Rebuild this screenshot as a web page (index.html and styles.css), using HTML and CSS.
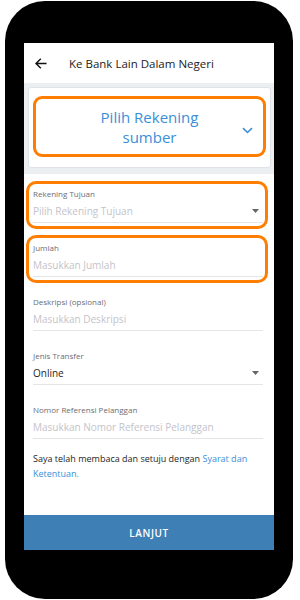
FILE: index.html
```html
<!DOCTYPE html>
<html lang="id">
<head>
<meta charset="utf-8">
<title>Ke Bank Lain Dalam Negeri</title>
<link rel="stylesheet" href="styles.css">
</head>
<body>
<div class="phone">
  <div class="screen">
    <header class="topbar">
      <svg class="back" width="12" height="11" viewBox="0 0 12 11"><path d="M11.5 5.5H1M5.8 0.7L1 5.5l4.8 4.8" fill="none" stroke="#111" stroke-width="1.4"/></svg>
      <span class="title">Ke Bank Lain Dalam Negeri</span>
    </header>
    <section class="source">
      <div class="card">
        <div class="source-box">
          <span class="source-text">Pilih Rekening<br>sumber</span>
          <svg class="chev" width="11" height="7" viewBox="0 0 11 7"><path d="M1 1.2l4.5 4.3L10 1.2" fill="none" stroke="#3b8fd8" stroke-width="1.6"/></svg>
        </div>
      </div>
    </section>
    <div class="form">
      <div class="field hl">
        <div class="label">Rekening Tujuan</div>
        <div class="row"><span class="ph">Pilih Rekening Tujuan</span><svg class="caret" width="7" height="4" viewBox="0 0 7 4"><path d="M0 0h7L3.5 4z" fill="#666"/></svg></div>
      </div>
      <div class="field hl">
        <div class="label">Jumlah</div>
        <div class="row"><span class="ph">Masukkan Jumlah</span></div>
      </div>
      <div class="field">
        <div class="label">Deskripsi (opsional)</div>
        <div class="row"><span class="ph">Masukkan Deskripsi</span></div>
      </div>
      <div class="field">
        <div class="label">Jenis Transfer</div>
        <div class="row"><span class="val">Online</span><svg class="caret" width="7" height="4" viewBox="0 0 7 4"><path d="M0 0h7L3.5 4z" fill="#666"/></svg></div>
      </div>
      <div class="field">
        <div class="label">Nomor Referensi Pelanggan</div>
        <div class="row"><span class="ph">Masukkan Nomor Referensi Pelanggan</span></div>
      </div>
      <p class="terms">Saya telah membaca dan setuju dengan <a class="link">Syarat dan</a><br><a class="link">Ketentuan.</a></p>
    </div>
    <button class="submit">LANJUT</button>
  </div>
</div>
</body>
</html>
```
FILE: styles.css
```css
* { box-sizing: border-box; }
html, body { margin: 0; padding: 0; background: #fff; }
body { font-family: "Open Sans", "Noto Sans", sans-serif; }

.phone {
  width: 288px;
  height: 598px;
  margin: 1px 0 0 5px;
  background: #000;
  border-radius: 40px;
  padding: 42px 19px 49px;
}

.screen {
  width: 250px;
  height: 507px;
  background: #fff;
  display: flex;
  flex-direction: column;
}

.topbar {
  height: 40px;
  display: flex;
  align-items: center;
  padding-left: 11px;
  gap: 22px;
  flex: none;
}
.back { display: block; margin-top: 1px; }
.title { font-size: 11.5px; color: #222; }

.source {
  background: #eceff2;
  padding: 4px 3px 6px 4px;
  flex: none;
}
.card {
  background: #fff;
  border: 1px solid #dfe3e8;
  border-radius: 3px;
  padding: 8px 4px 10px 4px;
}
.source-box {
  position: relative;
  height: 61px;
  border: 3px solid #ff7d00;
  border-radius: 9px;
  display: flex;
  align-items: center;
  justify-content: center;
}
.source-text {
  font-size: 15px;
  line-height: 20px;
  color: #3b8fd8;
  text-align: center;
  margin-top: 1px;
}
.chev { position: absolute; right: 10px; top: 28px; }

.form {
  flex: 1;
  padding: 7px 6px 0 2px;
}
.field {
  border: 3px solid transparent;
  border-radius: 10px;
  padding: 4px 2px 3px 4px;
  margin-bottom: 6px;
}
.field.hl { border-color: #ff7d00; }
.label {
  font-size: 8px;
  line-height: 12px;
  color: #6d6d72;
}
.row {
  height: 23px;
  border-bottom: 1px solid #e4e5e8;
  display: flex;
  align-items: center;
  justify-content: space-between;
  padding-right: 4px;
}
.ph { font-size: 10px; color: #c3c3ca; }
.val { font-size: 10px; color: #1e1e1e; }
.caret { display: block; }

.terms {
  margin: 1px 0 0 7px;
  font-size: 9px;
  line-height: 15px;
  color: #1e1e1e;
}
.link { color: #3b8fd8; }

.submit {
  flex: none;
  height: 35px;
  border: 0;
  margin: 0;
  background: #3e80b5;
  color: #fff;
  font-family: inherit;
  font-size: 10px;
  font-weight: 600;
  letter-spacing: 0.6px;
}
```
